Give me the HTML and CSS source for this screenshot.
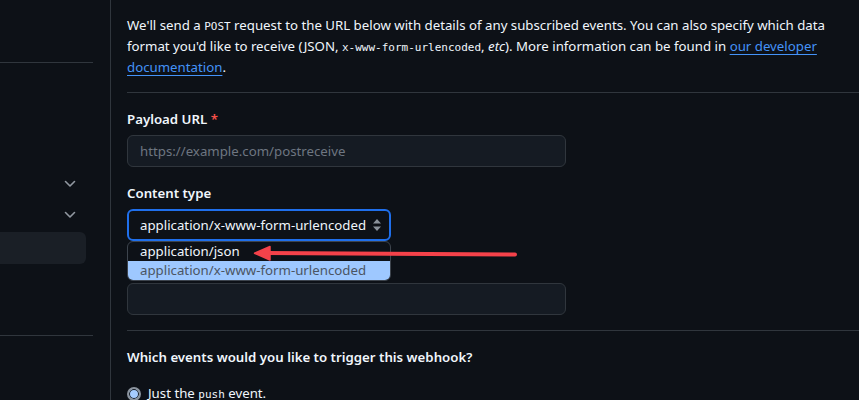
FILE: index.html
```html
<!DOCTYPE html>
<html>
<head>
<meta charset="utf-8">
<link rel="stylesheet" href="styles.css">
</head>
<body>
<div class="page">
  <aside class="sidebar">
    <div class="side-top"></div>
    <div class="side-list">
      <div class="side-item"><svg class="chev" viewBox="0 0 12 8" width="12" height="8"><path d="M1.5 1.5 L6 6 L10.5 1.5" fill="none" stroke="#9198a1" stroke-width="1.6" stroke-linecap="round" stroke-linejoin="round"/></svg></div>
      <div class="side-item"><svg class="chev" viewBox="0 0 12 8" width="12" height="8"><path d="M1.5 1.5 L6 6 L10.5 1.5" fill="none" stroke="#9198a1" stroke-width="1.6" stroke-linecap="round" stroke-linejoin="round"/></svg></div>
      <div class="side-item selected"></div>
    </div>
    <div class="side-bottom"></div>
  </aside>
  <main class="main">
    <p class="intro">We'll send a <code>POST</code> request to the URL below with details of any subscribed events. You can also specify which data format you'd like to receive (JSON, <code>x-www-form-urlencoded</code>, <em>etc</em>). More information can be found in <a href="#">our developer documentation</a>.</p>
    <hr class="rule">
    <div class="field">
      <label class="label">Payload URL <span class="req">*</span></label>
      <div class="input"><span class="placeholder">https://example.com/postreceive</span></div>
    </div>
    <div class="field">
      <label class="label">Content type</label>
      <div class="select-wrap">
        <div class="select">
          <span class="sel-text">application/x-www-form-urlencoded</span>
          <svg class="caret" viewBox="0 0 10 14" width="10" height="14"><path d="M5 1 L9 5.5 L1 5.5 Z M5 13 L9 8.5 L1 8.5 Z" fill="#8b929b"/></svg>
        </div>
        <div class="dropdown">
          <div class="opt">application/json</div>
          <div class="opt active">application/x-www-form-urlencoded</div>
        </div>
      </div>
    </div>
    <div class="field">
      <label class="label">Secret</label>
      <div class="input"></div>
    </div>
    <hr class="rule rule2">
    <div class="label events">Which events would you like to trigger this webhook?</div>
    <div class="radio-row"><span class="radio"></span><span>Just the <code>push</code> event.</span></div>
  </main>
</div>
<svg class="arrow" width="859" height="400" viewBox="0 0 859 400">
  <path d="M266 253 L515 254.5" stroke="#f5424a" stroke-width="4" stroke-linecap="round" fill="none"/>
  <path d="M254.5 253.2 L270 246.5 L270 260 Z" fill="#f5424a" stroke="#f5424a" stroke-width="1.5" stroke-linejoin="round"/>
</svg>
</body>
</html>
```
FILE: styles.css
```css
html, body {
  margin: 0;
  padding: 0;
  background: #0d1117;
  color: #f0f6fc;
  font-family: "Noto Sans", "Open Sans", sans-serif;
  font-size: 13.25px;
  overflow: hidden;
}
.page {
  display: flex;
  width: 859px;
  height: 400px;
  position: relative;
}
.sidebar {
  width: 110px;
  flex: none;
  border-right: 1px solid #30363d;
  display: flex;
  flex-direction: column;
}
.side-top {
  width: 93px;
  height: 62px;
  border-bottom: 1px solid #30363d;
}
.side-list {
  padding-top: 105px;
  display: flex;
  flex-direction: column;
  width: 86px;
}
.side-item {
  height: 31px;
  display: flex;
  align-items: center;
  justify-content: flex-end;
  padding-right: 10px;
}
.side-item.selected {
  height: 32px;
  margin-top: 2px;
  background: #1a1f26;
  border-radius: 0 6px 6px 0;
}
.side-bottom {
  width: 93px;
  margin-top: 71px;
  border-top: 1px solid #30363d;
}
.main {
  flex: 1;
  padding-left: 16px;
  position: relative;
}
.intro {
  margin: 0;
  padding-top: 15px;
  line-height: 21px;
  width: 705px;
}
code {
  font-family: "DejaVu Sans Mono", "Liberation Mono", monospace;
  font-size: 11px;
  line-height: 14px;
}
a {
  color: #4493f8;
  text-decoration: underline;
  text-underline-offset: 3px;
}
.rule {
  margin: 14px 0 0 0;
  border: 0;
  border-top: 1px solid #30363d;
  height: 0;
}
.field {
  margin-top: 16px;
}
.label {
  display: block;
  font-weight: 600;
  line-height: 21px;
  margin-bottom: 5px;
}
.req { color: #f85149; }
.input {
  box-sizing: border-box;
  width: 439px;
  height: 32px;
  border: 1px solid #30363d;
  border-radius: 6px;
  background: #151b23;
  display: flex;
  align-items: center;
  padding-left: 12px;
}
.placeholder { color: #6e7681; }
.select-wrap {
  position: relative;
  width: 264px;
}
.select {
  box-sizing: border-box;
  height: 32px;
  border: 2px solid #1f6feb;
  border-radius: 6px;
  background: #0d1117;
  display: flex;
  align-items: center;
  justify-content: space-between;
  padding: 0 7px 0 11px;
  white-space: nowrap;
}
.caret { display: block; flex: none; }
.dropdown {
  position: absolute;
  top: 32px;
  left: 0;
  width: 262px;
  border: 1px solid #3d444d;
  border-radius: 6px;
  overflow: hidden;
  background: #0d1117;
  z-index: 2;
}
.opt {
  height: 19px;
  line-height: 19px;
  padding-left: 12px;
  color: #f0f6fc;
  white-space: nowrap;
}
.opt.active {
  background: #9ec8ff;
  color: #4b5563;
}
.rule2 { margin-top: 15px; }
.events { margin-top: 16px; margin-bottom: 0; }
.radio-row {
  display: flex;
  align-items: center;
  gap: 7px;
  margin-top: 15px;
  line-height: 21px;
}
.radio {
  width: 10px;
  height: 10px;
  border-radius: 50%;
  border: 2px solid #8b949e;
  background: #a5ccff;
  box-shadow: inset 0 0 0 1px #0d1117;
}
.arrow {
  position: absolute;
  left: 0;
  top: 0;
  pointer-events: none;
  z-index: 5;
}
```
